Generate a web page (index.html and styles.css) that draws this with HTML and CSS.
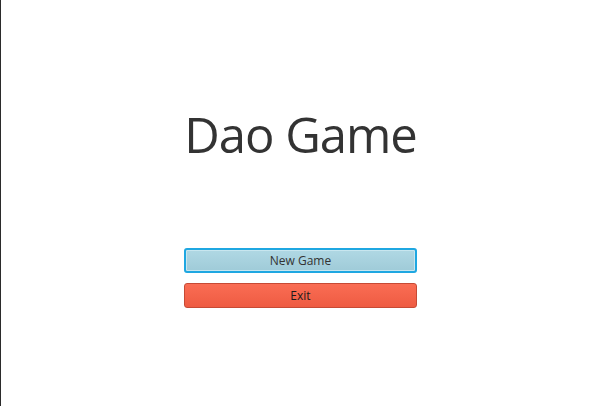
FILE: index.html
```html
<!DOCTYPE html>
<html>
<head>
<meta charset="utf-8">
<link rel="stylesheet" href="styles.css">
</head>
<body>
<div class="window">
  <h1 class="title">Dao Game</h1>
  <div class="menu">
    <button class="btn btn-new">New Game</button>
    <button class="btn btn-exit">Exit</button>
  </div>
</div>
</body>
</html>
```
FILE: styles.css
```css
html, body {
  margin: 0;
  padding: 0;
  background: #ffffff;
}
.window {
  box-sizing: border-box;
  width: 599px;
  height: 406px;
  border-left: 1px solid #2b2b2b;
  display: flex;
  flex-direction: column;
  align-items: center;
  font-family: "Open Sans", "Noto Sans", sans-serif;
}
.title {
  margin: 100px 0 0 0;
  font-weight: 400;
  font-size: 49px;
  line-height: 68px;
  color: #333333;
  letter-spacing: -1px;
  padding-left: 1px;
}
.menu {
  margin-top: 80px;
  display: flex;
  flex-direction: column;
  gap: 10px;
  margin-left: 1px;
}
.btn {
  box-sizing: border-box;
  width: 233px;
  height: 25px;
  border-radius: 3px;
  font-family: "Open Sans", "Noto Sans", sans-serif;
  font-size: 12px;
  color: #333333;
  padding: 0;
  margin: 0;
}
.btn-new {
  border: 2px solid #1fa7e1;
  background: linear-gradient(#b0d8e4, #9fcbd8);
  box-shadow: inset 0 0 0 1px #c8e6ef;
}
.btn-exit {
  border: 1px solid #c64a35;
  background: linear-gradient(#fa6d54, #ee5b42);
  color: #1a1a1a;
}
```
